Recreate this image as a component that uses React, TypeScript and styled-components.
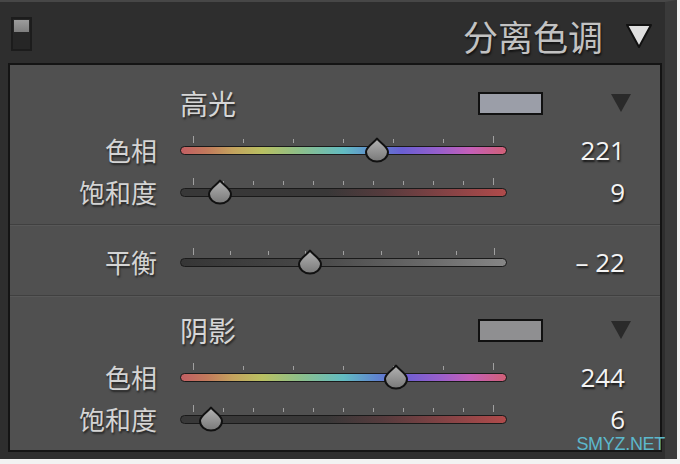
import styled, { createGlobalStyle } from 'styled-components'

const GlobalStyle = createGlobalStyle`
  html, body {
    margin: 0;
    padding: 0;
    background: #f2f2f2;
  }
  body {
    font-family: "Noto Sans CJK SC", "Noto Sans", sans-serif;
  }
`

type SliderKind = 'hue' | 'sat' | 'balance'

const trackFill: Record<SliderKind, string> = {
  hue: 'linear-gradient(90deg, #c25f63 0%, #c27a5c 8%, #c4a35e 16%, #b9c062 25%, #8fbf88 36%, #62bcc2 50%, #5f86cf 60%, #6a5fd3 68%, #9a5fcb 80%, #c55fb8 89%, #d06077 100%)',
  sat: 'linear-gradient(90deg, #383838 0%, #393838 45%, #553b3d 62%, #8a4446 84%, #b04b4b 100%)',
  balance: 'linear-gradient(90deg, #363636 0%, #474747 40%, #696969 75%, #868686 100%)',
}

const tickCount: Record<SliderKind, number> = { hue: 7, sat: 11, balance: 9 }

function Slider({ kind, pos }: { kind: SliderKind; pos: number }) {
  const n = tickCount[kind]
  return (
    <SliderBox>
      <Ticks>
        {Array.from({ length: n }, (_, i) => (
          <Tick key={i} $end={i === 0 || i === n - 1} />
        ))}
      </Ticks>
      <Track $kind={kind} />
      <Thumb style={{ left: pos * 300 }} width="26" height="26" viewBox="0 0 26 26">
        <defs>
          <linearGradient id="thumbFill" x1="0" y1="0" x2="0" y2="1">
            <stop offset="0" stopColor="#b4b4b4" />
            <stop offset="1" stopColor="#787878" />
          </linearGradient>
        </defs>
        <path
          d="M13 1.5 C15 5 24 9.5 24 15 A11 9.5 0 0 1 2 15 C2 9.5 11 5 13 1.5 Z"
          fill="url(#thumbFill)"
          stroke="#111"
          strokeWidth="2"
          strokeLinejoin="round"
        />
      </Thumb>
    </SliderBox>
  )
}

function Row({ label, kind, pos, value }: { label: string; kind: SliderKind; pos: number; value: string }) {
  return (
    <RowLine>
      <Label>{label}</Label>
      <Slider kind={kind} pos={pos} />
      <Value>{value}</Value>
    </RowLine>
  )
}

function SectionTitle({ title, swatch }: { title: string; swatch: string }) {
  return (
    <TitleLine>
      <TitleText>{title}</TitleText>
      <Swatch $color={swatch} />
      <svg width="22" height="20" viewBox="0 0 22 20">
        <polygon points="1,1 21,1 11,19" fill="#2a2a2a" />
      </svg>
    </TitleLine>
  )
}

export default function App() {
  return (
    <>
      <GlobalStyle />
      <Frame>
        <Header>
          <Toggle />
          <HeaderTitle>分离色调</HeaderTitle>
          <svg width="28" height="26" viewBox="0 0 28 26">
            <polygon
              points="2,2 26,2 14,24"
              fill="#dedede"
              stroke="#111"
              strokeWidth="2"
              strokeLinejoin="round"
            />
          </svg>
        </Header>
        <Panel>
          <Section $top={22} $bottom={11}>
            <SectionTitle title="高光" swatch="#9b9ea8" />
            <Rows>
              <Row label="色相" kind="hue" pos={221 / 360} value="221" />
              <Row label="饱和度" kind="sat" pos={0.09} value="9" />
            </Rows>
          </Section>
          <Section $top={16} $bottom={12} $divider>
            <Row label="平衡" kind="balance" pos={0.39} value="– 22" />
          </Section>
          <Section $top={18} $bottom={10} $divider>
            <SectionTitle title="阴影" swatch="#8f8f91" />
            <Rows>
              <Row label="色相" kind="hue" pos={244 / 360} value="244" />
              <Row label="饱和度" kind="sat" pos={0.06} value="6" />
            </Rows>
          </Section>
        </Panel>
        <Watermark>SMYZ.NET</Watermark>
      </Frame>
    </>
  )
}

const Frame = styled.div`
  position: relative;
  width: 665px;
  height: 457px;
  background: #2e2e2e;
  border-top: 2px solid #474747;
  border-right: 12px solid #3a3a3a;
`

const Header = styled.div`
  display: flex;
  align-items: center;
  height: 55px;
  padding: 6px 12px 0 11px;
`

const Toggle = styled.div`
  position: relative;
  width: 17px;
  height: 30px;
  margin-top: -4px;
  border: 2px solid #1c1c1c;
  background: #262626;

  &::before {
    content: '';
    position: absolute;
    left: 1px;
    top: 1px;
    width: 15px;
    height: 12px;
    background: linear-gradient(#9c9c9c, #7e7e7e);
  }
`

const HeaderTitle = styled.div`
  margin-left: auto;
  margin-right: 22px;
  font-size: 35px;
  line-height: 40px;
  color: #c2c2c2;
  text-shadow: 1px 2px 2px rgba(0, 0, 0, 0.6);
`

const Panel = styled.div`
  width: 650px;
  margin-left: 8px;
  background: #505050;
  border: 2px solid #141414;
`

const Section = styled.div<{ $top: number; $bottom: number; $divider?: boolean }>`
  padding-top: ${p => p.$top}px;
  padding-bottom: ${p => p.$bottom}px;
  border-top: ${p => (p.$divider ? '1px solid #404040' : 'none')};
  box-shadow: ${p => (p.$divider ? 'inset 0 1px 0 #585858' : 'none')};
`

const TitleLine = styled.div`
  display: flex;
  align-items: center;
  height: 32px;
  padding-left: 170px;
`

const TitleText = styled.div`
  width: 298px;
  font-size: 28px;
  line-height: 32px;
  color: #d6d6d6;
  text-shadow: 1px 2px 2px rgba(0, 0, 0, 0.55);
`

const Swatch = styled.div<{ $color: string }>`
  width: 61px;
  height: 19px;
  margin-right: 67px;
  background: ${p => p.$color};
  border: 2px solid #111;
`

const Rows = styled.div`
  margin-top: 10px;
`

const RowLine = styled.div`
  display: flex;
  align-items: center;
  height: 42px;
`

const Label = styled.div`
  width: 147px;
  margin-right: 23px;
  text-align: right;
  font-size: 26px;
  line-height: 30px;
  color: #d4d4d4;
  text-shadow: 1px 2px 2px rgba(0, 0, 0, 0.55);
`

const SliderBox = styled.div`
  position: relative;
  width: 327px;
  height: 42px;
  padding-top: 7px;
  box-sizing: border-box;
`

const Ticks = styled.div`
  display: flex;
  justify-content: space-between;
  align-items: flex-end;
  height: 7px;
  padding: 0 12.5px 0 12.5px;
`

const Tick = styled.div<{ $end: boolean }>`
  width: 1px;
  height: ${p => (p.$end ? 7 : 4)}px;
  background: #a0a0a0;
`

const Track = styled.div<{ $kind: SliderKind }>`
  height: 7px;
  margin-top: 3px;
  border: 1.5px solid #1a1a1a;
  border-radius: 6px;
  background: ${p => trackFill[p.$kind]};
`

const Thumb = styled.svg`
  position: absolute;
  top: 8px;
`

const Value = styled.div`
  width: 118px;
  text-align: right;
  font-family: "Open Sans", "Noto Sans", sans-serif;
  font-size: 26px;
  line-height: 30px;
  color: #f4f4f4;
  text-shadow: 1px 2px 2px rgba(0, 0, 0, 0.7);
`

const Watermark = styled.div`
  position: absolute;
  right: 0;
  bottom: 5px;
  font-family: "Liberation Sans", Arial, sans-serif;
  font-size: 18px;
  line-height: 20px;
  letter-spacing: -0.3px;
  color: #5cb8cc;
`
